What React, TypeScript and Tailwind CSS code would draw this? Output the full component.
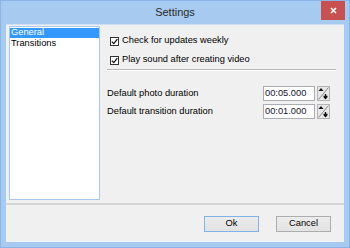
const font = { fontFamily: '"Liberation Sans", Arial, sans-serif' };

const CheckBox = () => (
  <div className="w-[9px] h-[9px] border border-[#333] bg-white flex items-center justify-center">
    <svg width="7" height="7" viewBox="0 0 7 7">
      <path d="M0.8 3.6 L2.8 5.6 L6.3 1.2" fill="none" stroke="#111" strokeWidth="1.3" />
    </svg>
  </div>
);

const Spinner = () => (
  <svg width="13" height="15" viewBox="0 0 13 15" className="block">
    <rect x="0.5" y="0.5" width="12" height="14" fill="#e8e8e8" stroke="#b4b4b4" />
    <path d="M1.5 13.5 L11.5 1.5" stroke="#8a8a8a" strokeWidth="1" />
    <path d="M4 2 L6.5 5 L1.5 5 Z" fill="#111" />
    <path d="M8.5 8 L8.5 13 M6.5 10.5 L10.5 10.5" stroke="#111" strokeWidth="1.3" />
    <path d="M6.5 11 L10.5 11 L8.5 13.5 Z" fill="#111" />
  </svg>
);

const TimeRow = ({ label, value }: { label: string; value: string }) => (
  <div className="flex items-center h-[15px]">
    <span className="text-black">{label}</span>
    <div className="ml-auto mr-[6px] flex items-center gap-[2px]">
      <div className="w-[52px] h-[15px] border border-[#abadb3] bg-white flex items-center pl-[1px] text-[#141432]">
        {value}
      </div>
      <Spinner />
    </div>
  </div>
);

export default function App() {
  return (
    <div
      className="w-[350px] h-[248px] bg-[#a6caf0] border border-[#8db4e6] flex flex-col text-[9.3px] leading-none"
      style={font}
    >
      {/* title bar */}
      <div className="h-[23px] grid grid-cols-[1fr_auto_1fr] items-start">
        <div />
        <div className="pt-[6px] text-[11px] text-[#2a2a2a]">Settings</div>
        <div className="flex justify-end pr-[4px]">
          <div className="w-[24px] h-[19px] bg-[#c75050] flex items-center justify-center">
            <svg width="7" height="7" viewBox="0 0 7 7">
              <path d="M1 1 L6 6 M6 1 L1 6" stroke="#fff" strokeWidth="1.6" />
            </svg>
          </div>
        </div>
      </div>

      {/* client area */}
      <div className="flex-1 mx-[5px] mb-[5px] bg-[#f0f0f0] border-t border-[#cfe0f4] flex flex-col">
        <div className="h-[178px] flex pl-[3px] pt-[1px]">
          <div className="w-[91px] h-[174px] bg-white border border-[#a9c8ec] p-[0px]">
            <div className="h-[10px] mt-[1px] bg-[#3399ff] text-white flex items-center pl-[1px]">General</div>
            <div className="h-[11px] flex items-center pl-[1px] text-black">Transitions</div>
          </div>

          <div className="flex-1 ml-[7px] mr-[8px] flex flex-col">
            <div className="mt-[8px] pl-[3px] h-[14px] flex items-center gap-[3px]">
              <CheckBox />
              <span className="text-black">Check for updates weekly</span>
            </div>
            <div className="mt-[5px] pl-[3px] h-[14px] flex items-center gap-[3px]">
              <CheckBox />
              <span className="text-black">Play sound after creating video</span>
            </div>
            <div className="mt-[2px] h-[1px] bg-[#b9b9b9]" />
            <div className="h-[1px] bg-white" />

            <div className="mt-[15px] flex flex-col gap-[3px]">
              <TimeRow label="Default photo duration" value="00:05.000" />
              <TimeRow label="Default transition duration" value="00:01.000" />
            </div>
          </div>
        </div>

        <div className="h-[2px] bg-[#d6d6d6]" />

        <div className="flex justify-end pt-[11px] pr-[13px] gap-[17px]">
          <button className="w-[55px] h-[16px] border border-[#7fb4ea] bg-gradient-to-b from-[#ececec] to-[#e2e2e2] text-black flex items-center justify-center">
            Ok
          </button>
          <button className="w-[55px] h-[16px] border border-[#adadad] bg-gradient-to-b from-[#ececec] to-[#e2e2e2] text-black flex items-center justify-center">
            Cancel
          </button>
        </div>
      </div>
    </div>
  );
}
